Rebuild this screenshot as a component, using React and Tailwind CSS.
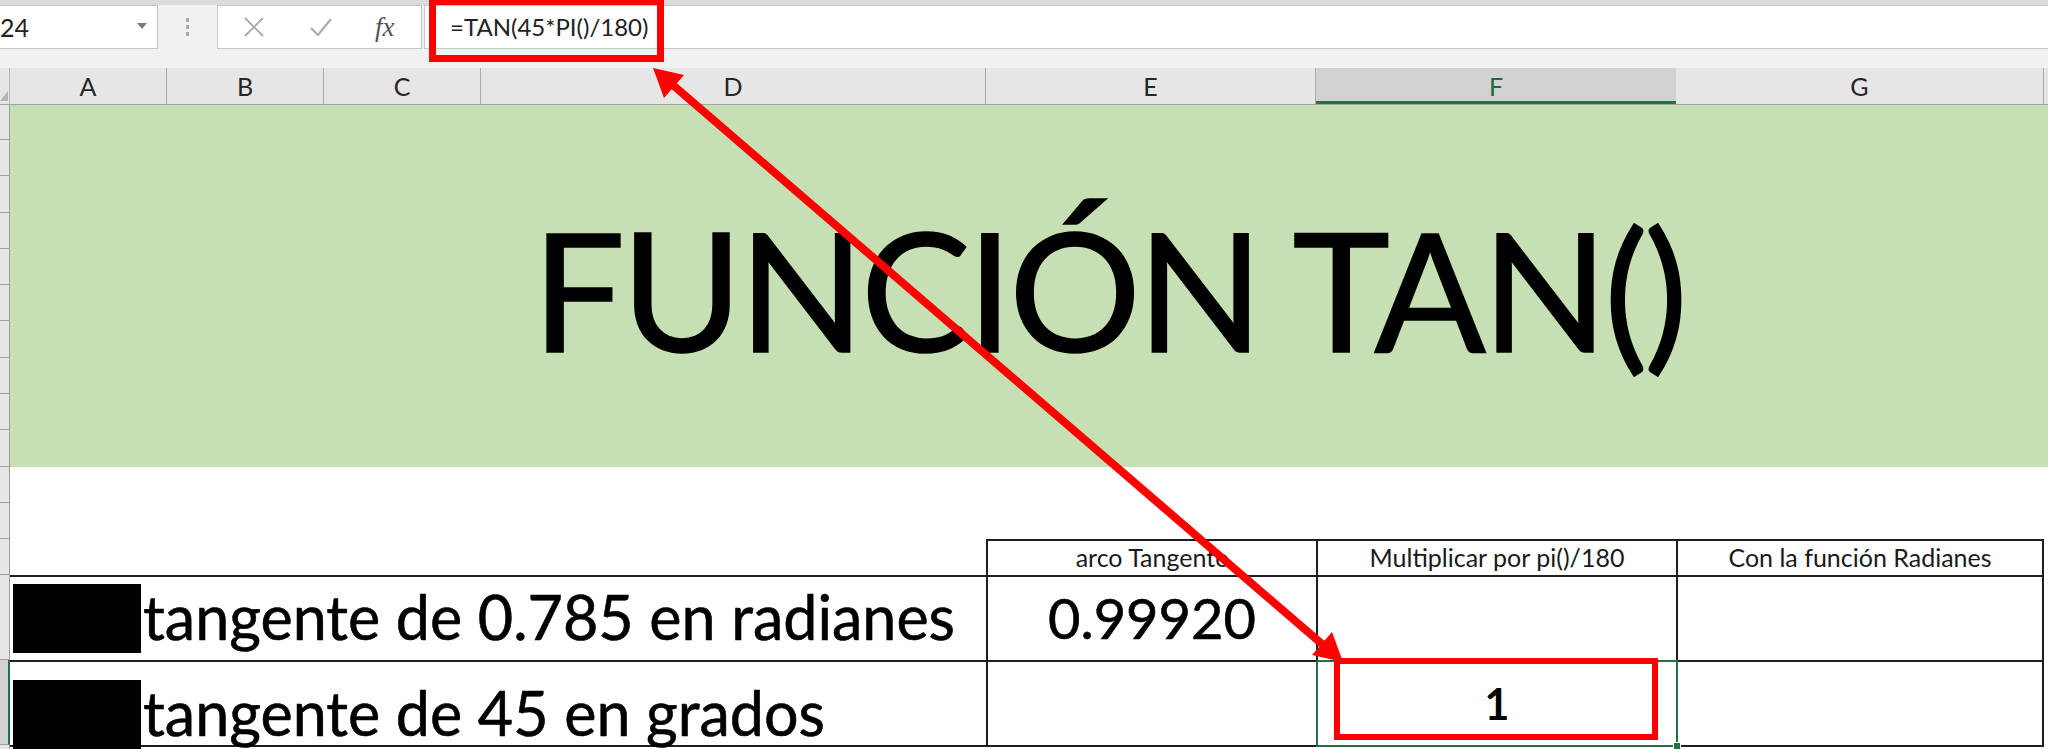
import { Fragment } from "react";

const LINE = "border-[#1f1f1f]";

const columns = [
  { id: "A", cls: "w-[157px]" },
  { id: "B", cls: "w-[157px]" },
  { id: "C", cls: "w-[157px]" },
  { id: "D", cls: "w-[505px]" },
  { id: "E", cls: "w-[330px]" },
  { id: "F", cls: "w-[360px]", active: true },
  { id: "G", cls: "w-[368px]" },
];

// row header ticks, top to bottom (merged title rows first)
const rowHeights = [
  { cls: "h-[35px]" },
  { cls: "h-[36px]" },
  { cls: "h-[37px]" },
  { cls: "h-[36px]" },
  { cls: "h-[36px]" },
  { cls: "h-[36px]" },
  { cls: "h-[37px]" },
  { cls: "h-[36px]" },
  { cls: "h-[36px]" },
  { cls: "h-[37px]" },
  { cls: "h-[36px]" },
  { cls: "h-[36px]" },
  { cls: "h-[36px]" },
  { cls: "h-[85px]" },
  { cls: "h-[85px]", active: true },
  { cls: "h-[20px]" },
];

function FormulaBar() {
  return (
    <div className="flex h-[68px] items-start border-t-[5px] border-[#dadada] bg-[#f1f1f1]">
      {/* name box */}
      <div className="relative flex h-[44px] w-[158px] items-start border border-l-0 border-[#c6c6c6] bg-white">
        <span className="pt-[9px] text-[25px] leading-none text-[#222]">24</span>
        <svg className="absolute left-[137px] top-[17px]" width="10" height="7" viewBox="0 0 10 7">
          <path d="M0 0 L10 0 L5 6 Z" fill="#7a7a7a" />
        </svg>
      </div>
      <div className="flex h-[44px] w-[59px] items-center justify-center">
        <svg width="4" height="20" viewBox="0 0 4 20">
          <rect x="0" y="1" width="3" height="4" fill="#a8a8a8" />
          <rect x="0" y="8" width="3" height="4" fill="#a8a8a8" />
          <rect x="0" y="15" width="3" height="4" fill="#a8a8a8" />
        </svg>
      </div>
      {/* cancel / enter / fx */}
      <div className="flex h-[44px] w-[205px] items-center border border-[#c6c6c6] bg-white">
        <svg className="ml-[25px]" width="22" height="22" viewBox="0 0 22 22">
          <path d="M2 2 L20 20 M20 2 L2 20" stroke="#a9a9a9" strokeWidth="1.8" fill="none" />
        </svg>
        <svg className="ml-[44px]" width="24" height="22" viewBox="0 0 24 22">
          <path d="M2 12 L9 19 L22 3" stroke="#a9a9a9" strokeWidth="2" fill="none" />
        </svg>
        <span className="ml-[42px] [font-family:'Liberation_Serif',serif] text-[27px] italic leading-none text-[#555]">
          fx
        </span>
      </div>
      <div className="ml-[2px] h-[44px] flex-1 border-y border-l border-[#c6c6c6] bg-white pl-[25px] pt-[9px]">
        <span className="text-[24px] leading-none text-[#222]">=TAN(45*PI()/180)</span>
      </div>
    </div>
  );
}

function ColumnHeaders() {
  return (
    <div className="flex h-[37px] border-b border-[#a3a3a3] bg-[#e6e6e6]">
      <div className="relative w-[10px] border-r border-[#b8b8b8]">
        <svg className="absolute bottom-[3px] right-[1px]" width="8" height="10" viewBox="0 0 8 10">
          <path d="M8 0 L8 10 L0 10 Z" fill="#b5b5b5" />
        </svg>
      </div>
      {columns.map((c) => (
        <div
          key={c.id}
          className={
            c.active
              ? `${c.cls} border-b-[3px] border-b-[#217346] bg-[#d2d2d2] pt-[6px] text-center text-[25px] leading-none text-[#1e6b43]`
              : `${c.cls} border-r border-[#ababab] pt-[6px] text-center text-[25px] leading-none text-[#262626]`
          }
        >
          {c.id}
        </div>
      ))}
      <div className="flex-1" />
    </div>
  );
}

function RowHeaders() {
  return (
    <div className="flex w-[10px] flex-col bg-[#e6e6e6]">
      {rowHeights.map((r, i) => (
        <div
          key={i}
          className={
            r.active
              ? `${r.cls} border-b border-r-2 border-b-[#9e9e9e] border-r-[#217346] bg-[#d2d2d2]`
              : `${r.cls} border-b border-r border-[#9e9e9e]`
          }
        />
      ))}
    </div>
  );
}

function Redacted() {
  return <div className="ml-[3px] mr-[2px] h-[69px] w-[128px] shrink-0 bg-black" />;
}

export default function App() {
  return (
    <div className="relative h-[749px] w-[2048px] overflow-hidden bg-white [font-family:Lato,'Noto_Sans',sans-serif] text-black">
      <FormulaBar />
      <ColumnHeaders />

      <div className="flex">
        <RowHeaders />
        <div className="flex-1">
          {/* merged title block */}
          <div className="h-[362px] bg-[#c6e0b4] pl-[522px] pt-[101px]">
            <h1 className="whitespace-nowrap text-[165px] font-normal leading-none tracking-[-4px] [-webkit-text-stroke:1.5px_#000]">
              FUNCIÓN TAN()
            </h1>
          </div>

          <div className="h-[72px]" />

          {/* table header */}
          <div className="flex h-[36px] w-[2034px]">
            <div className="w-[976px]" />
            <div className={`w-[330px] border-l-2 border-t-2 ${LINE} pt-[4px] text-center text-[25px] leading-none text-[#1a1a1a]`}>
              arco Tangente
            </div>
            <div className={`w-[360px] border-l-2 border-t-2 ${LINE} pt-[4px] text-center text-[25px] leading-none text-[#1a1a1a]`}>
              Multiplicar por pi()/180
            </div>
            <div className={`w-[368px] border-x-2 border-t-2 ${LINE} pt-[4px] text-center text-[25px] leading-none text-[#1a1a1a]`}>
              Con la función Radianes
            </div>
          </div>

          {/* row 1 */}
          <div className={`flex h-[85px] w-[2034px] border-t-2 ${LINE}`}>
            <div className="flex w-[976px] items-start pt-[7px]">
              <Redacted />
              <span className="whitespace-nowrap pt-[2px] text-[61px] leading-none [-webkit-text-stroke:0.6px_#000]">
                tangente de 0.785 en radianes
              </span>
            </div>
            <div className={`w-[330px] border-l-2 ${LINE} pt-[13px] text-center text-[56px] leading-none [-webkit-text-stroke:0.6px_#000]`}>
              0.99920
            </div>
            <div className={`w-[360px] border-l-2 ${LINE}`} />
            <div className={`w-[368px] border-x-2 ${LINE}`} />
          </div>

          {/* row 2 */}
          <div className={`flex h-[87px] w-[2034px] border-y-2 ${LINE}`}>
            <div className="flex w-[976px] items-start pt-[18px]">
              <Redacted />
              <span className="whitespace-nowrap pt-[2px] text-[61px] leading-none [-webkit-text-stroke:0.6px_#000]">
                tangente de 45 en grados
              </span>
            </div>
            <div className={`w-[330px] border-l-2 ${LINE}`} />
            <div className={`relative w-[360px] border-l-2 ${LINE} pt-[20px] text-center text-[43px] font-bold leading-none`}>
              1
              <div className="absolute -left-[2px] -top-[2px] h-[87px] w-[362px] border-2 border-[#217346]">
                <div className="absolute -bottom-[5px] -right-[5px] h-[8px] w-[8px] border border-white bg-[#217346]" />
              </div>
            </div>
            <div className={`w-[368px] border-x-2 ${LINE}`} />
          </div>
        </div>
      </div>

      {/* annotations */}
      <div className="pointer-events-none absolute left-[429px] top-[-2px] h-[64px] w-[235px] border-[7px] border-[#ff0000]" />
      <div className="pointer-events-none absolute left-[1334px] top-[658px] h-[82px] w-[324px] border-[6px] border-[#ff0000]" />
      <svg className="pointer-events-none absolute left-0 top-0" width="2048" height="749" viewBox="0 0 2048 749">
        <line x1="674" y1="86" x2="1322" y2="644" stroke="#ff0000" strokeWidth="8" />
        <polygon points="653,68 664,98 684,75" fill="#ff0000" />
        <polygon points="1343,662 1312,655 1332,632" fill="#ff0000" />
      </svg>
    </div>
  );
}
